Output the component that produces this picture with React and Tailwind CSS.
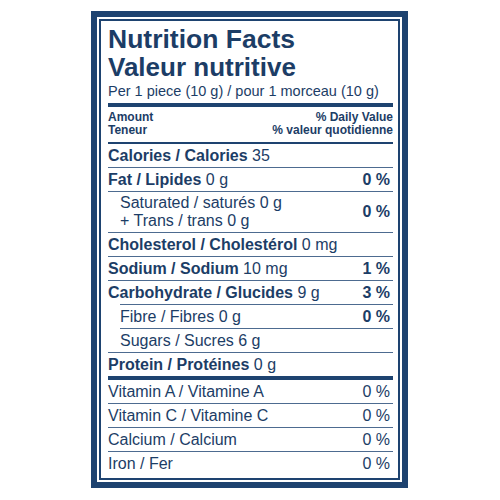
import React from "react";

const Rule = ({ indent = false }) => (
  <div className={"h-px bg-[#4d6b90] " + (indent ? "ml-[12px]" : "")} />
);

const Row = ({ bold, rest, pct, pctBold = true, indent = false }) => (
  <div className={"flex h-[23px] items-center justify-between leading-[23px] text-[16px] " + (indent ? "pl-[12px]" : "")}>
    <span>
      {bold && <span className="font-bold">{bold}</span>}
      {rest && <span className="font-normal">{rest}</span>}
    </span>
    {pct && <span className={"pr-[3px] " + (pctBold ? "font-bold" : "font-normal")}>{pct}</span>}
  </div>
);

export default function App() {
  return (
    <div className="w-[500px] h-[500px] bg-white pt-[11px] pl-[91px]" style={{ fontFamily: '"Liberation Sans", Arial, sans-serif' }}>
      <div className="w-[317px] h-[477px] border-[6px] border-[#1e4370] p-[2px]">
        <div className="h-full border-2 border-[#1e4370] pl-[7px] pr-[5px] pt-[4px] text-[#1c3d66]">
          <div className="text-[26.5px] leading-[28px] font-bold">Nutrition Facts</div>
          <div className="text-[26px] leading-[28px] font-bold">Valeur nutritive</div>
          <div className="text-[14.5px] leading-[20px]">Per 1 piece (10 g) / pour 1 morceau (10 g)</div>
          <div className="mt-[2px] h-[4px] bg-[#1e4370]" />
          <div className="pt-[4px] pb-[5px] text-[12px] leading-[13px] font-bold">
            <div className="flex justify-between">
              <span>Amount</span>
              <span>% Daily Value</span>
            </div>
            <div className="flex justify-between">
              <span>Teneur</span>
              <span>% valeur quotidienne</span>
            </div>
          </div>
          <div className="h-[2px] bg-[#1e4370]" />
          <Row bold="Calories / Calories" rest=" 35" />
          <Rule />
          <Row bold="Fat / Lipides" rest=" 0 g" pct="0 %" />
          <Rule />
          <div className="flex h-[40px] items-center justify-between pl-[12px] text-[16px]">
            <div className="leading-[18px]">
              <div>Saturated / saturés 0 g</div>
              <div>+ Trans / trans 0 g</div>
            </div>
            <span className="pr-[3px] font-bold">0 %</span>
          </div>
          <Rule />
          <Row bold="Cholesterol / Cholestérol" rest=" 0 mg" />
          <Rule />
          <Row bold="Sodium / Sodium" rest=" 10 mg" pct="1 %" />
          <Rule />
          <Row bold="Carbohydrate / Glucides" rest=" 9 g" pct="3 %" />
          <Rule indent />
          <Row rest="Fibre / Fibres 0 g" pct="0 %" indent />
          <Rule indent />
          <Row rest="Sugars / Sucres 6 g" indent />
          <Rule />
          <Row bold="Protein / Protéines" rest=" 0 g" />
          <div className="h-[4px] bg-[#1e4370]" />
          <Row rest="Vitamin A / Vitamine A" pct="0 %" pctBold={false} />
          <Rule />
          <Row rest="Vitamin C / Vitamine C" pct="0 %" pctBold={false} />
          <Rule />
          <Row rest="Calcium / Calcium" pct="0 %" pctBold={false} />
          <Rule />
          <Row rest="Iron / Fer" pct="0 %" pctBold={false} />
        </div>
      </div>
    </div>
  );
}
